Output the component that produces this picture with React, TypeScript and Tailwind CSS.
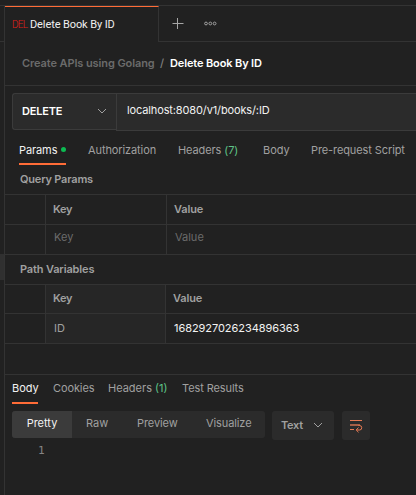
import type { ReactNode } from "react";

const line = "border-[#333333]";

function Cell({ className = "", children }: { className?: string; children?: ReactNode }) {
  return <div className={`flex items-center border-r pb-[2px] last:border-r-0 ${line} ${className}`}>{children}</div>;
}

function Chevron() {
  return (
    <svg width="10" height="6" viewBox="0 0 10 6" fill="none" stroke="#a0a0a0">
      <path d="M1 1l4 4 4-4" />
    </svg>
  );
}

function TabBar() {
  return (
    <div className="flex h-9 items-stretch">
      <div className="flex h-9 w-[154px] items-center border-t border-r border-t-[#ff6c37] border-r-[#333333] pt-px pl-[7px] font-['Roboto',sans-serif]">
        <span className="w-[18px] pb-px text-[10px] font-light tracking-[-0.7px] text-[#e0201a]">DEL</span>
        <span className="text-[11px] tracking-[-0.1px] text-[#f0f0f0]">Delete Book By ID</span>
      </div>
      <div className={`flex grow items-center border-b pl-[13px] ${line}`}>
        <svg width="12" height="12" viewBox="0 0 12 12" stroke="#a6a6a6" className="mr-[20px] mb-[1px]">
          <path d="M.5 6.5h11M5.5 1v11" />
        </svg>
        <svg width="13" height="5" viewBox="0 0 13 5" fill="none" stroke="#a0a0a0" className="mb-[1px]">
          <circle cx="2" cy="2.5" r="1.4" />
          <circle cx="6.3" cy="2.5" r="1.4" />
          <circle cx="10.6" cy="2.5" r="1.4" />
        </svg>
      </div>
    </div>
  );
}

function RequestLine() {
  return (
    <div className="flex h-[38px] items-start pl-[7px]">
      <div className="flex h-[37px] w-[104px] items-center justify-between rounded-l-[3px] border border-r-0 border-[#3b3b3b] bg-[#2b2b2b] pr-[9px] pb-[1px] pl-[9px]">
        <span className="text-[11px] font-semibold tracking-[-0.2px] text-white">DELETE</span>
        <Chevron />
      </div>
      <div className="flex h-[38px] grow items-center border border-r-0 border-[#3b3b3b] bg-[#2b2b2b] pb-[4px] pl-[10px] text-[11px] tracking-[-0.13px] text-[#f2f2f2]">
        localhost:8080/v1/books/:ID
      </div>
    </div>
  );
}

export default function App() {
  return (
    <div className="flex h-[495px] w-[416px] flex-col overflow-hidden bg-[#212121] font-['Inter',sans-serif] text-[11px] leading-4 whitespace-nowrap text-[#a0a0a0]">
      <div className={`h-[6px] shrink-0 border-b ${line}`} />
      <div className="flex grow">
        <div className={`flex w-[5px] shrink-0 flex-col border-r ${line}`}>
          <div className={`h-9 border-b ${line}`} />
          <div className="mt-[212px] h-[26px] bg-[#303030]" />
        </div>
        <div className="flex w-[411px] flex-col">
          <TabBar />
          <div className={`flex h-11 items-center border-b pb-[2px] pl-[17px] font-semibold ${line}`}>
            <span className="w-[138px] tracking-[-0.1px] text-[#6b6b6b]">Create APIs using Golang</span>
            <span className="w-[10px] font-medium text-[#808080]">/</span>
            <span className="tracking-[-0.13px] text-white">Delete Book By ID</span>
          </div>
          <div className="h-[7px]" />
          <RequestLine />
          <div className="flex h-[34px] items-stretch pl-[14px]">
            <div className="mr-[22px] flex w-[47px] items-center border-b-2 border-[#ff6c37] pt-[6px] pb-[1px] text-[#f2f2f2]">
              <span className="w-[42px] tracking-[-0.1px]">Params</span>
              <i className="size-[5px] shrink-0 rounded-full bg-[#0cbb52]" />
            </div>
            <div className="flex items-center pt-[3px]">
              <span className="w-[90px] tracking-[-0.1px]">Authorization</span>
              <span className="w-[85px] tracking-[-0.1px]">Headers <b className="font-normal text-[#5fc488]">(7)</b></span>
              <span className="w-[48px]">Body</span>
              <span className="tracking-[-0.1px]">Pre-request Script</span>
            </div>
          </div>
          <div className={`flex h-[30px] items-center border-b pb-[2px] pl-[15px] font-semibold tracking-[-0.2px] ${line}`}>Query Params</div>
          <div className={`grid h-[30px] grid-cols-[41px_121px_1fr] border-b font-semibold ${line}`}>
            <Cell />
            <Cell className="pl-[7px] tracking-[-0.3px]">Key</Cell>
            <Cell className="pl-[7px] tracking-[-0.15px]">Value</Cell>
          </div>
          <div className={`grid h-[30px] grid-cols-[41px_121px_1fr] border-b text-[#6b6b6b] ${line}`}>
            <Cell />
            <Cell className="pb-[5px] pl-[8px]">Key</Cell>
            <Cell className="pb-[5px] pl-[8px]">Value</Cell>
          </div>
          <div className={`flex h-[30px] items-center border-b pb-[2px] pl-[15px] font-semibold tracking-[-0.15px] ${line}`}>Path Variables</div>
          <div className={`grid h-[29px] grid-cols-[41px_120px_1fr] border-b font-semibold ${line}`}>
            <Cell />
            <Cell className="bg-[#262626] pl-[7px] tracking-[-0.3px]">Key</Cell>
            <Cell className="pl-[7px] tracking-[-0.15px]">Value</Cell>
          </div>
          <div className={`grid h-[30px] grid-cols-[41px_120px_1fr] border-b ${line}`}>
            <Cell />
            <Cell className="bg-[#262626] pl-[8px]">ID</Cell>
            <Cell className="pl-[8px] tracking-[-0.06px] text-[#f2f2f2]">1682927026234896363</Cell>
          </div>
          <div className={`h-[31px] border-b ${line}`} />
          <div className="flex h-[29px] items-stretch pl-[7px]">
            <span className="mr-[15px] w-[26px] border-b-2 border-[#ff6c37] pt-[5px] text-[#f2f2f2]">Body</span>
            <span className="w-[55px] pt-[5px] tracking-[-0.1px]">Cookies</span>
            <span className="w-[74px] pt-[5px]">Headers <b className="font-normal text-[#5fc488]">(1)</b></span>
            <span className="pt-[5px] tracking-[-0.1px]">Test Results</span>
          </div>
          <div className="flex items-start pt-[7px] pl-[7px]">
            <div className="mr-[7px] flex h-[27px] w-[253px] items-stretch overflow-hidden rounded-[3px] bg-[#2b2b2b] leading-[25px]">
              <span className="w-[60px] bg-[#3b3b3b] text-center text-[#f2f2f2]">Pretty</span>
              <span className="w-[65px] pl-[14px]">Raw</span>
              <span className="w-[69px] tracking-[-0.1px]">Preview</span>
              <span className="tracking-[-0.1px]">Visualize</span>
            </div>
            <div className="mr-[8px] flex h-[29px] w-[62px] items-center justify-between rounded-[3px] bg-[#2b2b2b] pr-[11px] pb-[1px] pl-[9px] font-semibold tracking-[-0.3px]">
              Text
              <Chevron />
            </div>
            <div className="flex h-[29px] w-[28px] items-center justify-center rounded-[3px] bg-[#2b2b2b]">
              <svg width="14" height="14" viewBox="0 0 14 14" fill="none" stroke="#e87b54">
                <path d="M1 1.5h12M9.5 6.5h1a2.2 2.2 0 0 1 0 4.5H7.5M1 10.5h4M9.5 8.5L7.2 11l2.3 2.3" />
                <path d="M1 6h10" strokeWidth="2" strokeOpacity=".65" />
              </svg>
            </div>
          </div>
          <div className="pt-[3px] pl-[33px] font-['DejaVu_Sans_Mono',monospace] text-[11px] text-[#858585]">1</div>
        </div>
      </div>
    </div>
  );
}
